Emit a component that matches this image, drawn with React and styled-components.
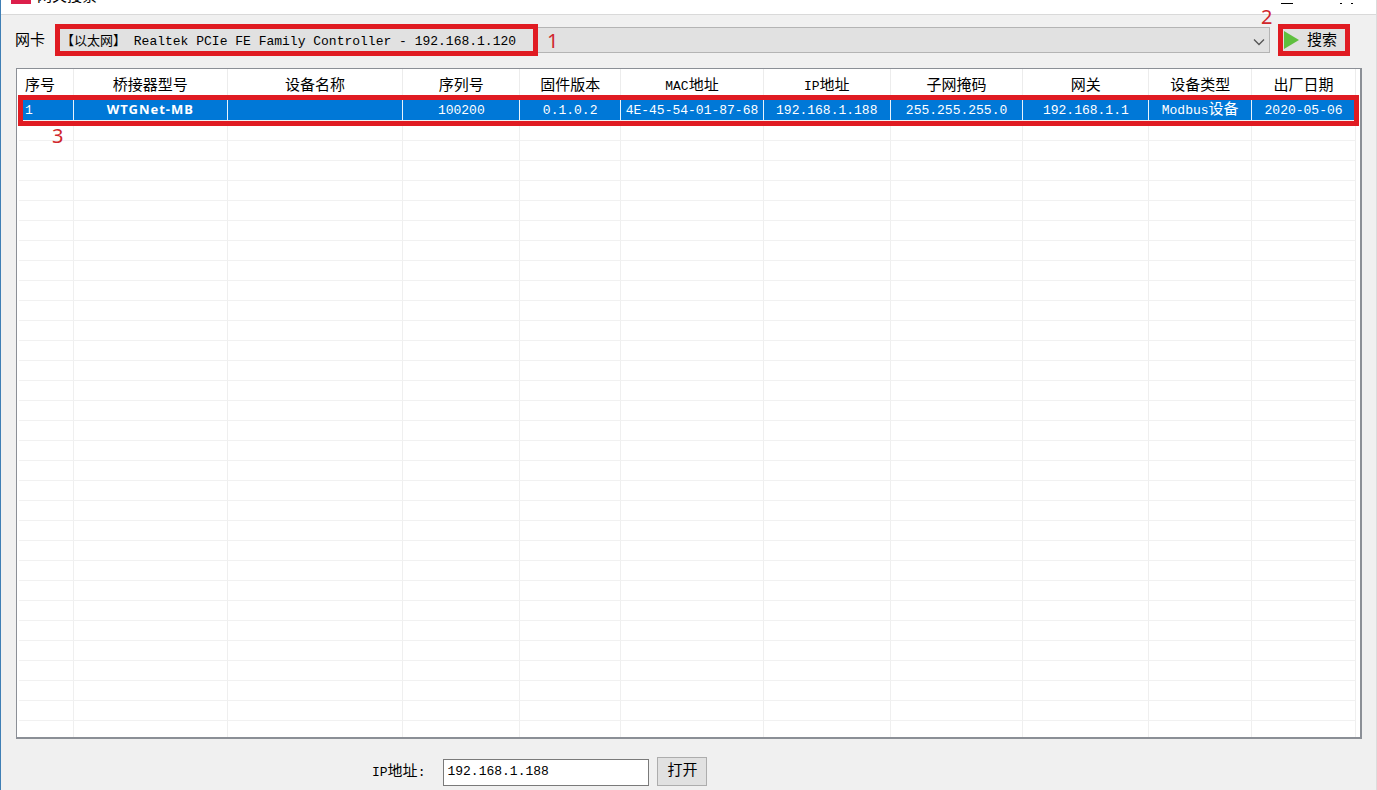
import React from 'react';
import styled, { createGlobalStyle } from 'styled-components';

const Global = createGlobalStyle`
  * { box-sizing: border-box; }
  body {
    margin: 0;
    overflow: hidden;
    color: #000;
    background: #f0f0f0;
    font: 15px/20px "Liberation Mono", "Noto Sans CJK SC", monospace;
  }
  button, input, select { font: inherit; color: inherit; border-radius: 0; margin: 0; }
`;

const Window = styled.div`
  height: 100vh;
  display: flex;
  flex-direction: column;
  overflow: hidden;
  border-left: 1px solid #3f7fb5;
  border-right: 1px solid #dcdcdc;
`;

const TitleBar = styled.header`
  flex: none;
  height: 15px;
  display: flex;
  align-items: flex-end;
  justify-content: space-between;
  overflow: hidden;
  padding: 0 20px 10px 10px;
  background: #fff;
  border-bottom: 1px solid #d9d9d9;
`;

const Brand = styled.div`
  display: flex;
  align-items: flex-end;
  gap: 6px;
`;

const Logo = styled.span`
  width: 20px;
  height: 20px;
  background: #dc1f4b;
`;

const Title = styled.span`
  font-size: 15px;
  line-height: 12px;
`;

const Toolbar = styled.form`
  flex: none;
  display: flex;
  align-items: center;
  padding: 9px 26px 12px 14px;
`;

const Label = styled.label`
  flex: none;
  padding-top: 3px;
`;

const Latin = styled.span`
  font-size: 13px;
`;

const Picker = styled.div`
  position: relative;
  flex: 1;
  margin: 0 8px 0 10px;
  height: 32px;
  display: flex;
  align-items: center;
`;

const Select = styled.select`
  appearance: none;
  width: 100%;
  height: 26px;
  padding: 3px 30px 0 5px;
  border: 1px solid #b4b4b4;
  background: #e1e1e1;
  font-size: 13px;
`;

const Chevron = styled.svg`
  position: absolute;
  right: 5px;
  top: 14px;
  pointer-events: none;
`;

const Outline = styled.span`
  position: absolute;
  inset: 0 auto 0 0;
  width: 483px;
  border: 5px solid #e01b22;
  pointer-events: none;
`;

const Mark = styled.span`
  position: absolute;
  left: ${(p) => p.$x}px;
  top: ${(p) => p.$y}px;
  color: #d0262b;
  font: 20px/24px "Noto Sans", sans-serif;
  pointer-events: none;
`;

const SearchBox = styled.div`
  position: relative;
  flex: none;
  border: 5px solid #e01b22;
`;

const SearchButton = styled.button`
  display: flex;
  align-items: center;
  gap: 8px;
  height: 22px;
  padding: 0 8px 0 1px;
  border: 0;
  background: #e1e1e1;
`;

const ButtonText = styled.span`
  padding-top: 4px;
`;

const ListPanel = styled.main`
  position: relative;
  flex: 1;
  min-height: 0;
  margin: 0 14px 0 15px;
  border: 2px solid #8b8f96;
  border-width: 1px 2px 2px 1px;
  background: #fff;
  padding: 0 4px 0 2px;
`;

const Clip = styled.div`
  height: 100%;
  overflow: hidden;
`;

const Table = styled.table`
  width: 100%;
  table-layout: fixed;
  border-collapse: separate;
  border-spacing: 0;
`;

const Head = styled.th`
  height: 31px;
  padding: 5px 0 0;
  font-weight: 400;
  text-align: ${(p) => p.$align || 'center'};
  padding-left: ${(p) => (p.$align ? 6 : 0)}px;
  border-right: 1px solid #ececec;
  white-space: nowrap;
`;

const Cell = styled.td`
  height: 20px;
  padding: 0 0 0 ${(p) => (p.$align ? 6 : 0)}px;
  line-height: 19px;
  font-size: 13px;
  text-align: ${(p) => p.$align || 'center'};
  border-right: 1px solid ${(p) => (p.$on ? '#e8f3fc' : '#efefef')};
  border-bottom: 1px solid #f1f1f1;
  white-space: nowrap;
  color: #fff;
  background: ${(p) => (p.$on ? '#0078d7' : '#fff')};
  &:last-child { border-right-color: #efefef; }
`;

const Model = styled.b`
  font: 700 13px/19px "Noto Sans", sans-serif;
  letter-spacing: 1px;
`;

const Han = styled.span`
  font-size: 15px;
  line-height: 18px;
`;

const RowOutline = styled.span`
  position: absolute;
  left: 1px;
  right: 1px;
  top: 26px;
  height: 31px;
  border: 5px solid #e01b22;
  pointer-events: none;
`;

const Footer = styled.form`
  flex: none;
  display: flex;
  align-items: center;
  padding: 18px 0 4px 371px;
`;

const IpInput = styled.input`
  width: 206px;
  height: 27px;
  margin: 2px 8px 0 18px;
  padding: 0 3px 3px;
  border: 1px solid #7a7a7a;
  background: #fff;
  font-size: 13px;
`;

const OpenButton = styled.button`
  height: 29px;
  width: 50px;
  padding: 0;
  border: 1px solid #adadad;
  background: #e1e1e1;
`;

const columns = [
  ['序号', 55], ['桥接器型号', 154], ['设备名称', 176], ['序列号', 117],
  ['固件版本', 101], ['MAC地址', 143], ['IP地址', 127], ['子网掩码', 133],
  ['网关', 126], ['设备类型', 103], ['出厂日期', 104],
];
const total = columns.reduce((sum, c) => sum + c[1], 0);
const device = ['1', <Model>WTGNet-MB</Model>, '', '100200', '0.1.0.2', '4E-45-54-01-87-68',
  '192.168.1.188', '255.255.255.0', '192.168.1.1', <>Modbus<Han>设备</Han></>, '2020-05-06'];
const emptyRows = Array.from({ length: 40 }, (_, i) => i);
const alignOf = (i) => (i === 0 ? 'left' : undefined);

function Heading({ text }) {
  const [, latin, han] = text.match(/^([A-Z]*)(.*)$/);
  return <>{latin && <Latin>{latin}</Latin>}{han}</>;
}

export default function App() {
  return (
    <Window>
      <Global />
      <TitleBar>
        <Brand><Logo /><Title>网关搜索</Title></Brand>
        <svg width="76" height="10" viewBox="0 0 76 10" stroke="#000" fill="none">
          <path d="M1 9.500H13M60 9.500H62M71 9.500H73" />
        </svg>
      </TitleBar>

      <Toolbar onSubmit={(e) => e.preventDefault()}>
        <Label htmlFor="adapter">网卡</Label>
        <Picker>
          <Select id="adapter">
            <option>【以太网】 Realtek PCIe FE Family Controller - 192.168.1.120</option>
          </Select>
          <Chevron width="12" height="8" viewBox="0 0 12 8" fill="none" stroke="#555" strokeWidth="1.300">
            <path d="M1 1.500L6 6.500L11 1.500" />
          </Chevron>
          <Outline />
          <Mark $x={492} $y={5}>1</Mark>
        </Picker>
        <SearchBox>
          <SearchButton type="submit">
            <svg width="15" height="18" viewBox="0 0 15 18"><path d="M0 0L15 9L0 18Z" fill="#5fbf3f" /></svg>
            <ButtonText>搜索</ButtonText>
          </SearchButton>
          <Mark $x={-22} $y={-24}>2</Mark>
        </SearchBox>
      </Toolbar>

      <ListPanel>
        <Clip>
          <Table>
            <colgroup>
              {columns.map(([name, w]) => <col key={name} style={{ width: `${(w / total) * 100}%` }} />)}
            </colgroup>
            <thead>
              <tr>
                {columns.map(([name], i) => (
                  <Head key={name} $align={alignOf(i)}><Heading text={name} /></Head>
                ))}
              </tr>
            </thead>
            <tbody>
              <tr>
                {device.map((value, i) => (
                  <Cell key={columns[i][0]} $on $align={alignOf(i)}>{value}</Cell>
                ))}
              </tr>
              {emptyRows.map((row) => (
                <tr key={row}>{columns.map(([name]) => <Cell key={name} />)}</tr>
              ))}
            </tbody>
          </Table>
        </Clip>
        <RowOutline />
        <Mark $x={35} $y={55}>3</Mark>
      </ListPanel>

      <Footer onSubmit={(e) => e.preventDefault()}>
        <Label htmlFor="ip"><Latin>IP</Latin>地址<Latin>:</Latin></Label>
        <IpInput id="ip" defaultValue="192.168.1.188" />
        <OpenButton type="submit">打开</OpenButton>
      </Footer>
    </Window>
  );
}
